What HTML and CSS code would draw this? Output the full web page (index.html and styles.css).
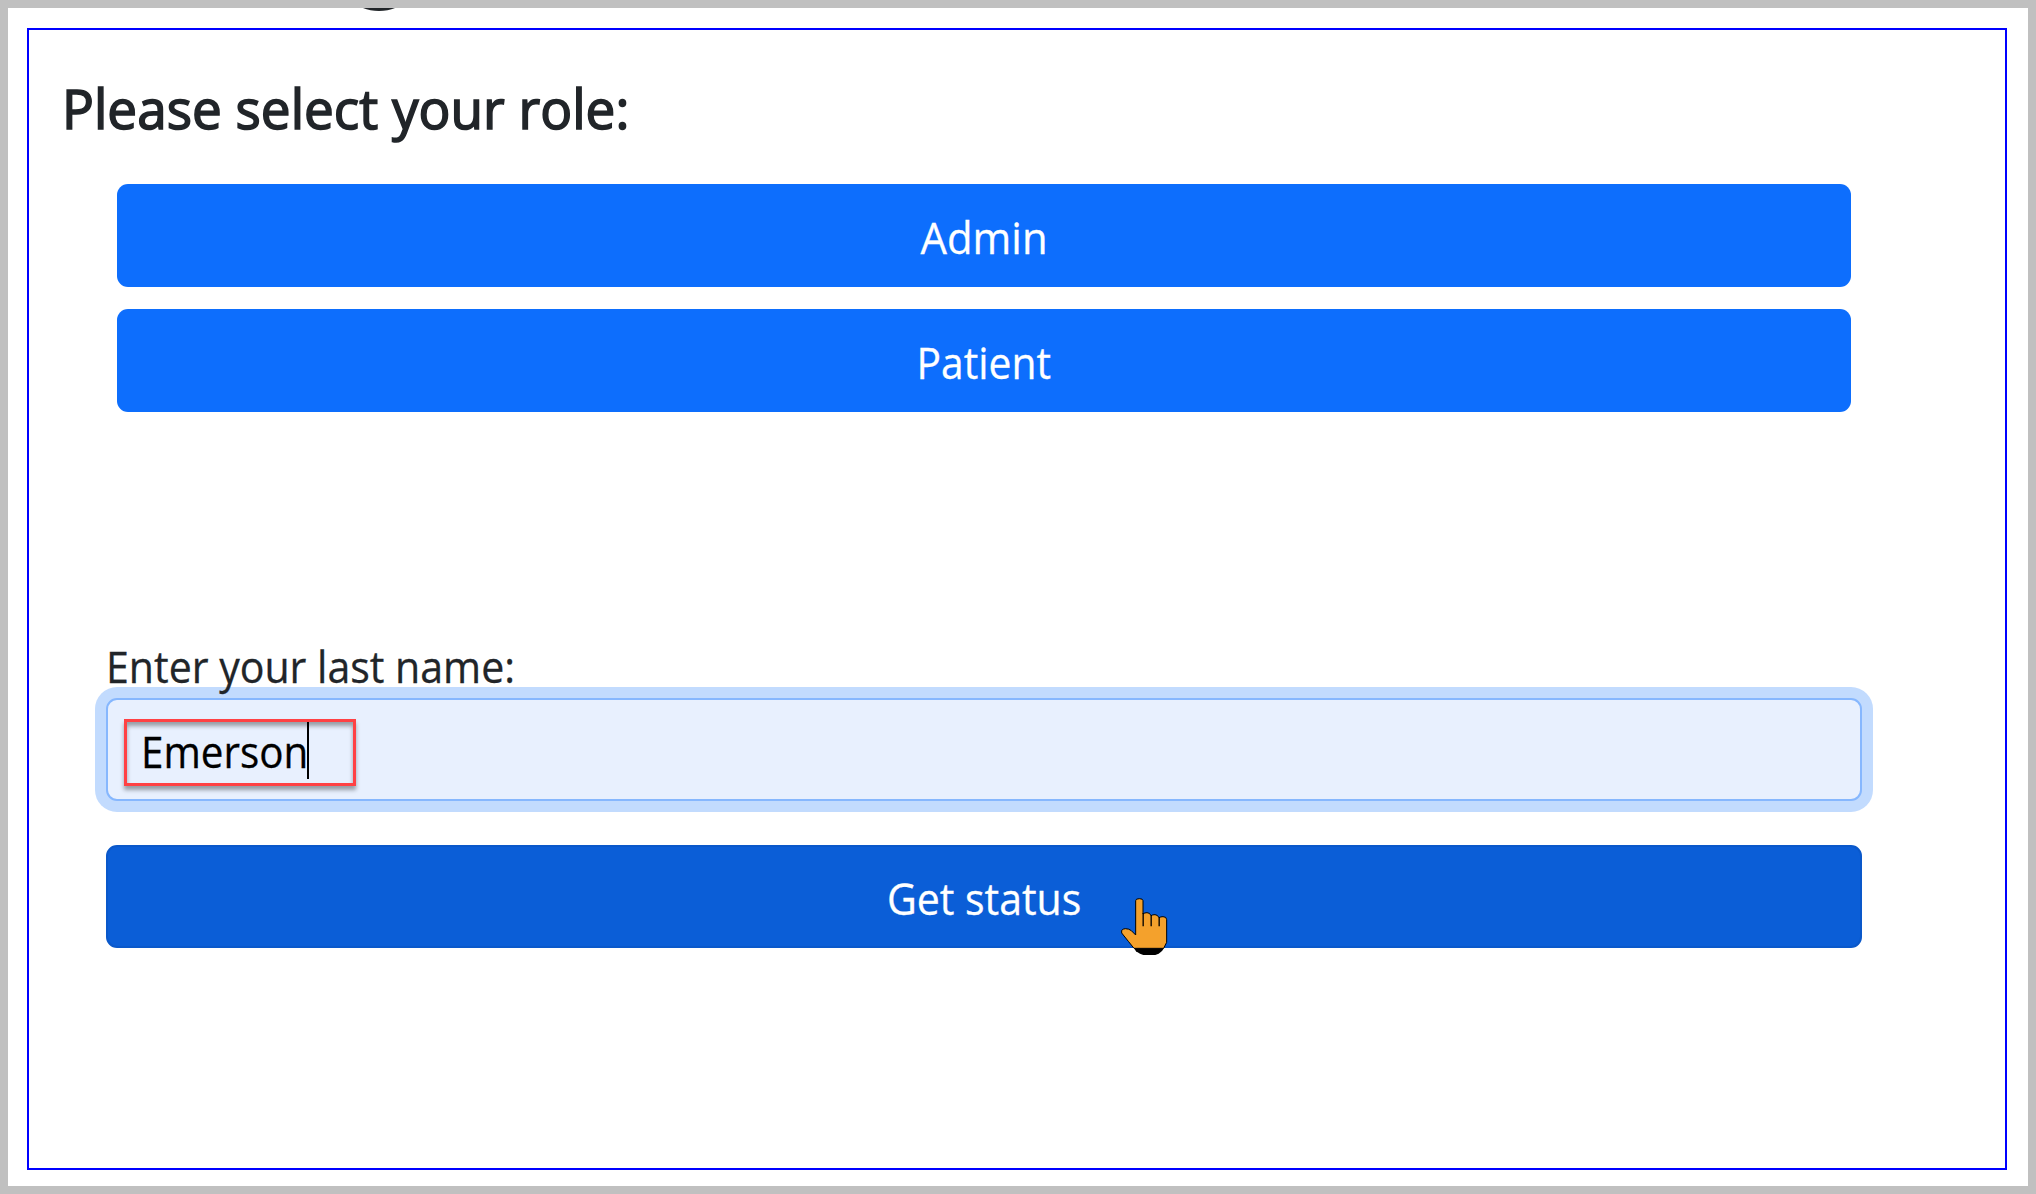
FILE: index.html
```html
<!DOCTYPE html>
<html lang="en">
<head>
<meta charset="utf-8">
<title>Select your role</title>
<link rel="stylesheet" href="styles.css">
</head>
<body>
<main class="page">
  <div class="title-tail"><svg width="32" height="3" viewBox="0 0 32 3"><path d="M0 0H32Q25 3 16 3Q7 3 0 0Z" fill="#212529"/></svg></div>
  <section class="panel">
    <h1 class="heading"><span class="text t-heading">Please select your role:</span></h1>
    <div class="roles">
      <button class="btn"><span class="text t-admin">Admin</span></button>
      <button class="btn"><span class="text t-patient">Patient</span></button>
    </div>
    <form class="lookup">
      <label class="label"><span class="text t-label">Enter your last name:</span></label>
      <div class="field">
        <span class="text value">Emerson</span><span class="caret"></span>
        <span class="highlight"></span>
      </div>
      <button class="btn btn-hover" type="button"><span class="text t-status">Get status</span>
        <svg class="pointer" width="48" height="60" viewBox="60 50 144 180">
          <path d="M107 164V61Q107 55 118 55Q129 55 129 61V101Q134 97 141 97Q150 97 153 106Q157 103 165 103Q173 103 177 112Q182 109 189 109Q200 109 200 118V186L191 204H102L85 183L65 158V150Q70 145 76 145Q87 145 94 151Z" fill="#f4a12c" stroke="#000" stroke-width="3"/>
          <path d="M102 204H192L186 212L176 220L166 224H130L120 220L108 213Z" fill="#000"/>
          <path d="M129.500 98V138M153.500 105V138M177.500 111V138" stroke="#000" stroke-width="4"/>
        </svg>
      </button>
    </form>
  </section>
</main>
</body>
</html>
```
FILE: styles.css
```css
* { box-sizing: border-box; }
body { margin: 0; font-family: "Open Sans", "Noto Sans", sans-serif; color: #212529; }
.page { width: 2036px; height: 1194px; border: 8px solid #c0c0c0; background: #fff; overflow: hidden; }
.title-tail { height: 20px; padding-left: 355px; }
.title-tail svg { display: block; }
.panel { width: 1980px; height: 1142px; margin-left: 19px; border: 2px solid #00f; padding: 39px 143px 0 77px; }
.text { display: inline-block; transform-origin: center; white-space: nowrap; -webkit-text-stroke: .3px currentColor; }
.heading { margin: 0 0 0 -44px; height: 115px; padding-top: 1px; font-size: 54.500px; font-weight: 500; line-height: 76px; white-space: nowrap; }
.t-heading { transform: scaleX(.974); transform-origin: left; -webkit-text-stroke: 1.600px #212529; }
.t-admin { transform: scaleX(.962); }
.t-patient { transform: scaleX(.937); }
.t-status { transform: scaleX(.943); }
.t-label { transform: scaleX(.944); transform-origin: left; }
.roles { display: flex; flex-direction: column; gap: 22px; padding: 0 11px; }
.btn { position: relative; display: flex; align-items: center; justify-content: center; width: 100%; height: 103px; padding: 5px 0 0; border: 0; border-radius: 11px; background: #0d6efd; color: #fff; font: 400 43.500px/66px "Open Sans", "Noto Sans", sans-serif; }
.lookup { margin-top: 223px; }
.label { display: block; height: 63px; font-size: 43.500px; line-height: 64px; position: relative; z-index: 1; }
.field { position: relative; display: flex; align-items: center; height: 103px; margin-bottom: 44px; padding-left: 33px; border: 2px solid #86b7fe; border-radius: 11px; background: #e8f0fe; box-shadow: 0 0 0 11px #c2dbfe; color: #000; font-size: 43.500px; }
.value { padding-top: 4px; transform: scaleX(.928); transform-origin: left; }
.caret { position: absolute; left: 199px; top: 22px; width: 2px; height: 57px; background: #000; }
.highlight { position: absolute; left: 16px; top: 19px; width: 232px; height: 67px; border: 3px solid #ff4144; box-shadow: 0 4px 4px rgba(0,0,0,.35), inset 0 4px 4px rgba(0,0,0,.35); }
.btn-hover { background: #0b5ed7; border: 2px solid #0a58ca; }
.pointer { position: absolute; left: 1012px; top: 50px; overflow: visible; }
```
